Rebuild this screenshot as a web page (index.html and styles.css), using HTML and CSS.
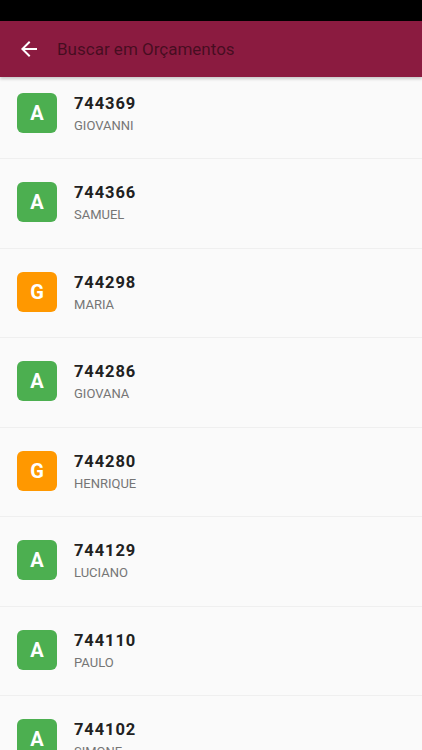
FILE: index.html
```html
<!DOCTYPE html>
<html lang="pt">
  <head>
    <meta charset="utf-8">
    <link rel="stylesheet" href="styles.css">
  </head>
  <body>
    <div class="statusbar"></div>
    <header class="appbar">
      <svg class="back" viewBox="0 0 24 24" width="24" height="24">
        <path d="M20 11H7.83l5.59-5.59L12 4l-8 8 8 8 1.41-1.41L7.83 13H20v-2z" fill="#fff"/>
      </svg>
      <span class="search">Buscar em Orçamentos</span>
    </header>
    <div class="content">
      <ul class="list">
        <li class="row">
          <div class="badge green">A</div>
          <div class="info"><div class="num">744369</div><div class="name">GIOVANNI</div></div>
        </li>
        <li class="row">
          <div class="badge green">A</div>
          <div class="info"><div class="num">744366</div><div class="name">SAMUEL</div></div>
        </li>
        <li class="row">
          <div class="badge orange">G</div>
          <div class="info"><div class="num">744298</div><div class="name">MARIA</div></div>
        </li>
        <li class="row">
          <div class="badge green">A</div>
          <div class="info"><div class="num">744286</div><div class="name">GIOVANA</div></div>
        </li>
        <li class="row">
          <div class="badge orange">G</div>
          <div class="info"><div class="num">744280</div><div class="name">HENRIQUE</div></div>
        </li>
        <li class="row">
          <div class="badge green">A</div>
          <div class="info"><div class="num">744129</div><div class="name">LUCIANO</div></div>
        </li>
        <li class="row">
          <div class="badge green">A</div>
          <div class="info"><div class="num">744110</div><div class="name">PAULO</div></div>
        </li>
        <li class="row">
          <div class="badge green">A</div>
          <div class="info"><div class="num">744102</div><div class="name">SIMONE</div></div>
        </li>
      </ul>
    </div>
  </body>
</html>
```

FILE: styles.css
```css
html, body {
  margin: 0;
  height: 100%;
  overflow: hidden;
}
body {
  background: #fafafa;
  font-family: Roboto, "Noto Sans", sans-serif;
  display: flex;
  flex-direction: column;
}
.statusbar {
  height: 21px;
  background: #000;
  flex: none;
}
.appbar {
  height: 56px;
  flex: none;
  background: #8b1b40;
  display: flex;
  align-items: center;
  padding-left: 17px;
  position: relative;
  z-index: 2;
  box-shadow: 0 2px 3px rgba(0,0,0,0.2);
}
.back {
  flex: none;
}
.search {
  margin-left: 16px;
  font-size: 17px;
  color: rgba(0, 0, 0, 0.5);
}
.content {
  flex: 1;
  overflow: hidden;
}
.list {
  list-style: none;
  margin: -7.5px 0 0;
  padding: 0;
}
.row {
  height: 89.5px;
  box-sizing: border-box;
  border-bottom: 1px solid #efefef;
  display: flex;
  align-items: center;
  padding: 0 0 2px 17px;
}
.badge {
  width: 40px;
  height: 40px;
  border-radius: 6px;
  color: #fff;
  font-weight: bold;
  font-size: 20px;
  display: flex;
  align-items: center;
  justify-content: center;
  flex: none;
}
.green { background: #4caf50; }
.orange { background: #ff9800; }
.info {
  margin: 4px 0 0 17px;
}
.num {
  font-size: 16.5px;
  font-weight: bold;
  letter-spacing: 0.9px;
  color: #212121;
  line-height: 20px;
}
.name {
  font-size: 13px;
  color: #757575;
  line-height: 20px;
  margin-top: 2px;
}
```
